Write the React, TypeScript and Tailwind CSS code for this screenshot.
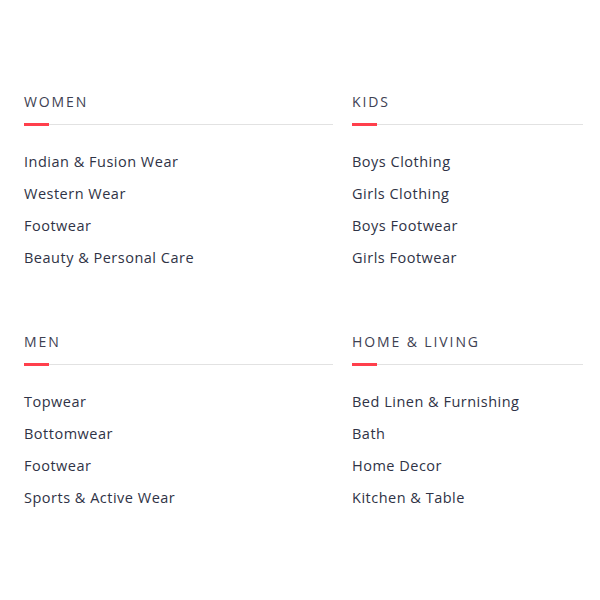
import React from "react";

const sections = [
  { title: "WOMEN", items: ["Indian & Fusion Wear", "Western Wear", "Footwear", "Beauty & Personal Care"] },
  { title: "KIDS", items: ["Boys Clothing", "Girls Clothing", "Boys Footwear", "Girls Footwear"] },
  { title: "MEN", items: ["Topwear", "Bottomwear", "Footwear", "Sports & Active Wear"] },
  { title: "HOME & LIVING", items: ["Bed Linen & Furnishing", "Bath", "Home Decor", "Kitchen & Table"] },
];

function Section({ title, items }: { title: string; items: string[] }) {
  return (
    <div className="flex flex-col">
      <div className="h-[20px] text-[14px] leading-[20px] tracking-[1.9px] text-[#3e4152]">{title}</div>
      <div className="relative mt-[11px] h-[3px]">
        <div className="absolute left-0 right-0 top-[1px] h-px bg-[#e2e2e2]" />
        <div className="absolute left-0 top-0 h-[3px] w-[25px] bg-[#ff3f4c]" />
      </div>
      <ul className="mt-[25px] flex flex-col">
        {items.map((it) => (
          <li key={it} className="h-[32px] text-[14.5px] leading-[22px] tracking-[0.5px] text-[#2f3346]">
            {it}
          </li>
        ))}
      </ul>
    </div>
  );
}

export default function App() {
  return (
    <div className="h-[600px] w-[600px] bg-white pl-[24px] pt-[92px]" style={{ fontFamily: '"Open Sans", sans-serif' }}>
      <div className="grid grid-cols-[309px_231px] gap-x-[19px] gap-y-[53px]">
        {sections.map((s) => (
          <Section key={s.title} {...s} />
        ))}
      </div>
    </div>
  );
}
